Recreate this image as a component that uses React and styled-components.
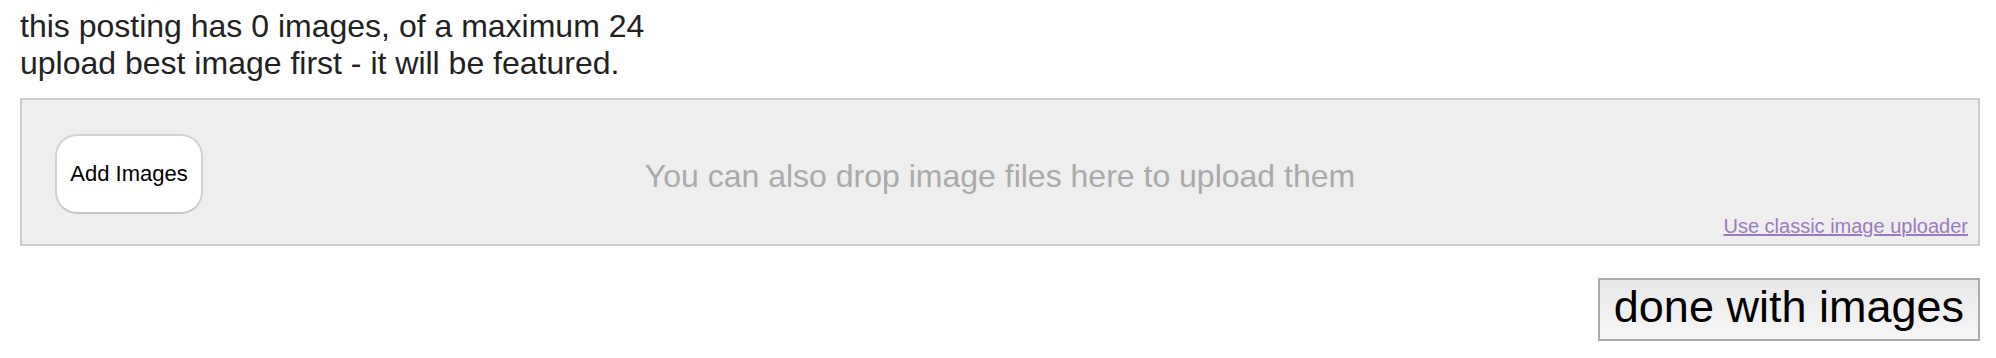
import styled, { createGlobalStyle } from "styled-components";

const Global = createGlobalStyle`
  html, body {
    margin: 0;
    background: #fff;
  }
  body {
    font-family: "Liberation Sans", Arial, sans-serif;
  }
`

const Page = styled.div`
  padding: 8px 16px 0 20px;
`

const Intro = styled.div`
  font-size: 32px;
  color: #222;
  line-height: normal;
`

const DropZone = styled.div`
  margin-top: 16px;
  height: 144px;
  background: #eee;
  border: 2px solid #ccc;
  display: grid;
  grid-template-columns: 1fr auto 1fr;
  align-items: center;
`

const AddButton = styled.button`
  justify-self: start;
  margin: 3px 0 0 33px;
  width: 148px;
  height: 80px;
  background: #fff;
  border: 2px solid #d2d2d2;
  border-bottom-color: #c4c4c4;
  border-radius: 22px;
  font-family: "Liberation Sans", Arial, sans-serif;
  font-size: 22px;
  color: #000;
  padding: 0;
  cursor: pointer;
`

const DropHint = styled.div`
  padding-top: 8px;
  font-size: 32px;
  color: #aaa;
  white-space: nowrap;
`

const ClassicLink = styled.a`
  align-self: end;
  justify-self: end;
  margin: 0 10px 6px 0;
  font-size: 20px;
  color: #9b7bbf;
  text-decoration: underline;
  white-space: nowrap;
`

const Actions = styled.div`
  display: flex;
  justify-content: flex-end;
  margin-top: 32px;
`

const DoneButton = styled.button`
  font-family: "Liberation Sans", Arial, sans-serif;
  font-size: 45px;
  line-height: normal;
  color: #000;
  padding: 1px 14px 6px;
  border: 2px solid #aaa;
  background: linear-gradient(#e8e8e8, #f6f6f6);
  border-radius: 0;
  cursor: pointer;
`

export default function App() {
  return (
    <Page>
      <Global/>
      <Intro>
        this posting has 0 images, of a maximum 24
        <br/>
        upload best image first - it will be featured.
      </Intro>
      <DropZone>
        <AddButton>Add Images</AddButton>
        <DropHint>You can also drop image files here to upload them</DropHint>
        <ClassicLink href="#">Use classic image uploader</ClassicLink>
      </DropZone>
      <Actions>
        <DoneButton>done with images</DoneButton>
      </Actions>
    </Page>
  )
}
